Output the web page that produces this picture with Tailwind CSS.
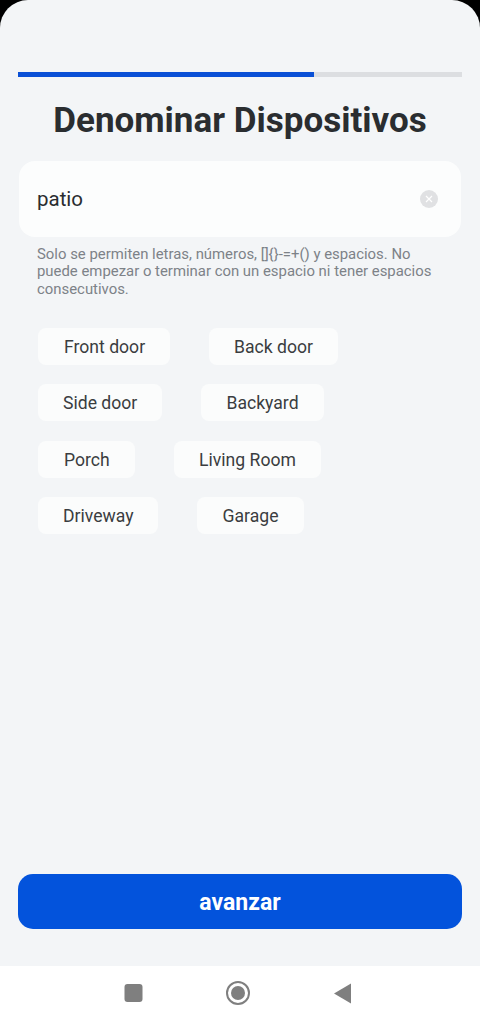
<!DOCTYPE html>
<html lang="es">
<head>
<meta charset="utf-8">
<title>Denominar Dispositivos</title>
<script src="https://cdn.jsdelivr.net/npm/@tailwindcss/browser@4"></script>
</head>
<body class="bg-black font-['Roboto',sans-serif]">
<div class="w-[480px] h-[1024px] flex flex-col rounded-t-[28px] overflow-hidden bg-[#f3f5f7]">
  <main class="flex-1 flex flex-col px-[18px] pt-[72px]">
    <div class="h-[5px] bg-[#dcdee1] flex">
      <div class="w-[296px] bg-[#0a50d6]"></div>
    </div>
    <h1 class="mt-[22px] h-[44px] text-center text-[35px] leading-[44px] font-bold text-[#2a2d30] whitespace-nowrap">Denominar Dispositivos</h1>
    <div class="mt-[18px] mx-px h-[76px] rounded-[16px] bg-[#fcfdfd] flex items-center justify-between pl-[18px] pr-[23px]">
      <span class="text-[20.5px] text-[#2a2d30] pt-[1px]">patio</span>
      <span class="w-[18px] h-[18px] rounded-full bg-[#e0e1e3] flex items-center justify-center">
        <svg width="8" height="8" viewBox="0 0 8 8" fill="none" stroke="#ffffff" stroke-width="1.2"><path d="M1 1l6 6M7 1L1 7"/></svg>
      </span>
    </div>
    <p class="mt-[9px] px-[19px] text-[14.9px] leading-[17.3px] text-[#7d8288]">Solo se permiten letras, números, []{}-=+() y espacios. No puede empezar o terminar con un espacio ni tener espacios consecutivos.</p>
    <div class="mt-[30px] pl-[20px] flex flex-col gap-[19.5px] text-[17.6px] leading-[39px] text-[#3a3d40]">
      <div class="flex gap-[39px]">
        <span class="h-[37px] w-[132px] pl-[26px] rounded-[8px] bg-[#fbfcfc]">Front door</span>
        <span class="h-[37px] w-[129px] text-center rounded-[8px] bg-[#fbfcfc]">Back door</span>
      </div>
      <div class="flex gap-[39px]">
        <span class="h-[37px] w-[124px] pl-[25px] rounded-[8px] bg-[#fbfcfc]">Side door</span>
        <span class="h-[37px] w-[123px] text-center rounded-[8px] bg-[#fbfcfc]">Backyard</span>
      </div>
      <div class="flex gap-[39px]">
        <span class="h-[37px] w-[97px] pl-[26px] rounded-[8px] bg-[#fbfcfc]">Porch</span>
        <span class="h-[37px] w-[147px] text-center rounded-[8px] bg-[#fbfcfc]">Living Room</span>
      </div>
      <div class="flex gap-[39px]">
        <span class="h-[37px] w-[120px] pl-[25px] rounded-[8px] bg-[#fbfcfc]">Driveway</span>
        <span class="h-[37px] w-[107px] text-center rounded-[8px] bg-[#fbfcfc]">Garage</span>
      </div>
    </div>
    <button class="mt-auto mb-[37px] h-[55px] w-full rounded-[15px] bg-[#0353dc] text-white text-[23px] font-bold pt-[4px]">avanzar</button>
  </main>
  <nav class="relative h-[58px] bg-white">
    <svg class="absolute left-0 top-0" width="480" height="58" viewBox="0 0 480 58">
      <rect x="124.500" y="18" width="18" height="18" rx="3" fill="#7f7f7f"/>
      <circle cx="238" cy="27" r="11" fill="none" stroke="#7f7f7f" stroke-width="2"/>
      <circle cx="238" cy="27" r="7" fill="#7f7f7f"/>
      <path d="M351 17.500V37.500L334 27.500Z" fill="#7f7f7f"/>
    </svg>
  </nav>
</div>
</body>
</html>
